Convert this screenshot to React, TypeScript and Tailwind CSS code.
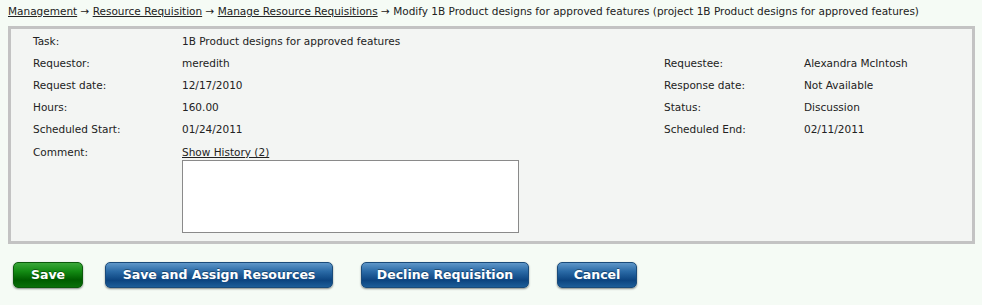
import React from "react";

const font = { fontFamily: '"DejaVu Sans", Verdana, sans-serif' };

function Row({ l1, v1, l2, v2 }: { l1: string; v1: string; l2?: string; v2?: string }) {
  return (
    <div className="flex h-[22px] items-center">
      <div className="w-[149px] shrink-0">{l1}</div>
      <div className="w-[482px] shrink-0">{v1}</div>
      {l2 ? (
        <>
          <div className="w-[140px] shrink-0">{l2}</div>
          <div>{v2}</div>
        </>
      ) : null}
    </div>
  );
}

function Btn({ children, green, className }: { children: React.ReactNode; green?: boolean; className?: string }) {
  return (
    <button
      className={
        "h-[26px] rounded-[5px] px-0 whitespace-nowrap flex items-center justify-center text-[12.5px] font-bold text-white border shadow-[0_1px_2px_rgba(0,0,0,0.45)] [text-shadow:0_-1px_0_rgba(0,0,0,0.35)] " +
        (green
          ? "border-[#0b5a0b] bg-[linear-gradient(to_bottom,#3aa83a_0%,#138a13_35%,#005c00_70%,#0a700a_100%)] "
          : "border-[#1a4b7a] bg-[linear-gradient(to_bottom,#5f97c9_0%,#2a6aa6_35%,#0c4480_72%,#1d5d98_100%)] ") +
        (className ?? "")
      }
      style={font}
    >
      {children}
    </button>
  );
}

export default function App() {
  return (
    <div className="w-[982px] h-[305px] bg-[#f5fbf5] text-[#222] text-[10.5px]" style={font}>
      <div className="pl-[8px] pt-[4px] leading-[14px] h-[26px] whitespace-nowrap">
        <a className="underline">Management</a> → <a className="underline">Resource Requisition</a> →{" "}
        <a className="underline">Manage Resource Requisitions</a> → Modify 1B Product designs for approved features
        (project 1B Product designs for approved features)
      </div>
      <div className="ml-[8px] w-[967px] h-[218px] border-[3px] border-[#c3c3c3] bg-[#f3f5f3] pl-[22px] pt-[2px]">
        <Row l1="Task:" v1="1B Product designs for approved features" />
        <Row l1="Requestor:" v1="meredith" l2="Requestee:" v2="Alexandra McIntosh" />
        <Row l1="Request date:" v1="12/17/2010" l2="Response date:" v2="Not Available" />
        <Row l1="Hours:" v1="160.00" l2="Status:" v2="Discussion" />
        <Row l1="Scheduled Start:" v1="01/24/2011" l2="Scheduled End:" v2="02/11/2011" />
        <div className="flex mt-[4px]">
          <div className="w-[149px] shrink-0 leading-[14px]">Comment:</div>
          <div className="flex flex-col">
            <a className="underline leading-[14px]">Show History (2)</a>
            <textarea className="mt-px w-[337px] h-[73px] border border-[#8a8a8a] bg-white resize-none outline-none" />
          </div>
        </div>
      </div>
      <div className="flex mt-[18px]">
        <Btn green className="ml-[13px] w-[70px]">Save</Btn>
        <Btn className="ml-[22px] w-[228px]">Save and Assign Resources</Btn>
        <Btn className="ml-[28px] w-[168px]">Decline Requisition</Btn>
        <Btn className="ml-[28px] w-[80px]">Cancel</Btn>
      </div>
    </div>
  );
}
